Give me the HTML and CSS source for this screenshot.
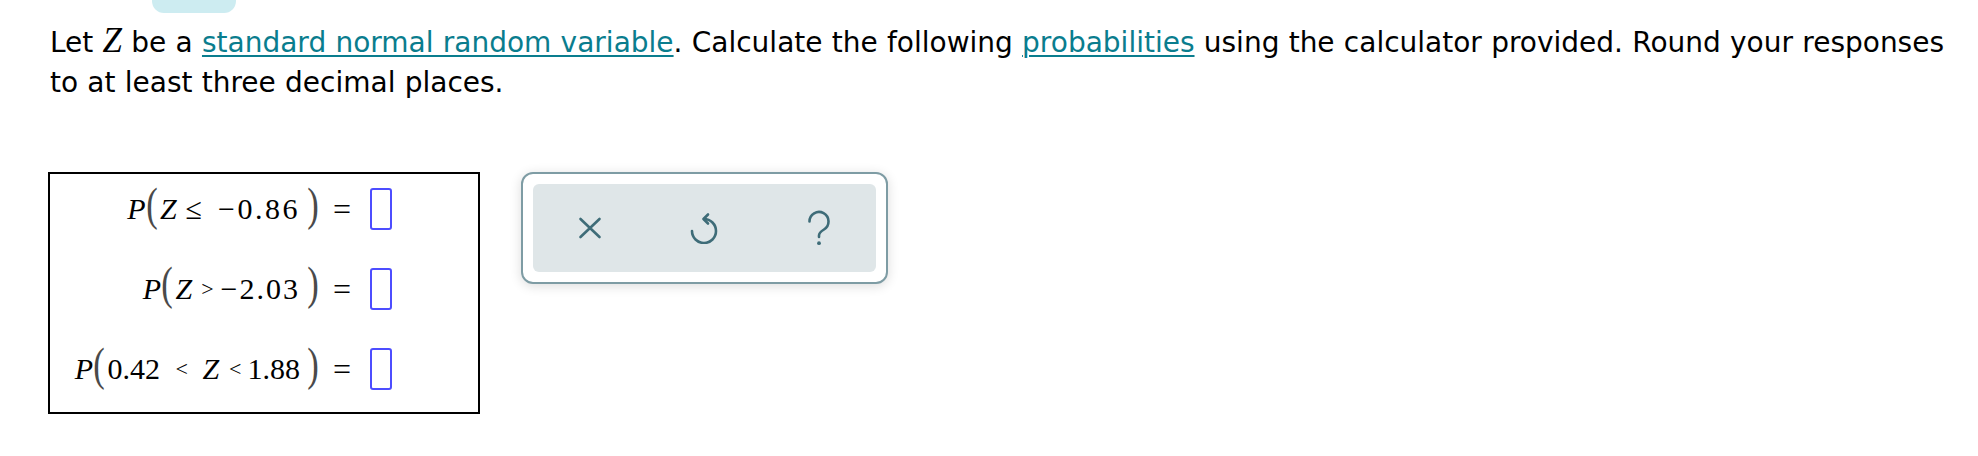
FILE: index.html
```html
<!DOCTYPE html>
<html lang="en">
<head>
<meta charset="utf-8">
<title>Standard normal probabilities</title>
<link rel="stylesheet" href="styles.css">
</head>
<body>
<div class="tab"></div>
<p class="question">Let <i class="mvar">Z</i> be a <a href="#" class="link">standard normal random variable</a>. Calculate the following <a href="#" class="link">probabilities</a> using the calculator provided. Round your responses to at least three decimal places.</p>

<div class="work">
  <div class="mathbox">
    <div class="expr"><i class="it">P</i><span class="paren open">(</span><i class="it">Z</i><span class="rel le">≤</span><span class="num wide">−0.86</span><span class="paren close">)</span></div>
    <div class="eq">=</div>
    <div class="answer"></div>

    <div class="expr"><i class="it">P</i><span class="paren open">(</span><i class="it">Z</i><span class="rel gt">&gt;</span><span class="num mid">−2.03</span><span class="paren close">)</span></div>
    <div class="eq">=</div>
    <div class="answer"></div>

    <div class="expr"><i class="it">P</i><span class="paren open">(</span><span class="num">0.42</span><span class="rel lt1">&lt;</span><i class="it">Z</i><span class="rel lt2">&lt;</span><span class="num">1.88</span><span class="paren close">)</span></div>
    <div class="eq">=</div>
    <div class="answer"></div>
  </div>

  <div class="calc">
    <div class="calc-inner">
      <div class="calc-btn" aria-label="Clear">
        <svg width="24" height="22" viewBox="0 0 24 22"><path d="M2.5 2 L21.5 20 M21.5 2 L2.5 20" fill="none" stroke="#3e6c78" stroke-width="2.6" stroke-linecap="round"/></svg>
      </div>
      <div class="calc-btn" aria-label="Undo">
        <svg width="28" height="32" viewBox="0 0 28 32"><path d="M14 7 A12 12 0 1 1 2 19" fill="none" stroke="#3e6c78" stroke-width="2.6" stroke-linecap="round"/><path d="M18 2.5 L13.5 7 L18 11.5" fill="none" stroke="#3e6c78" stroke-width="2.6" stroke-linecap="round" stroke-linejoin="round"/></svg>
      </div>
      <div class="calc-btn" aria-label="Help">
        <svg width="26" height="36" viewBox="0 0 26 36"><path d="M3.5 11.5 A9.5 9.5 0 1 1 18 19.5 C14.8 21.4 13 22.8 13 25.5 V27" fill="none" stroke="#3e6c78" stroke-width="2.6" stroke-linecap="round"/><circle cx="13" cy="33.2" r="1.9" fill="#3e6c78"/></svg>
      </div>
    </div>
  </div>
</div>
</body>
</html>
```

FILE: styles.css
```css
html, body {
  margin: 0;
  padding: 0;
  background: #ffffff;
}

body {
  font-family: "DejaVu Sans", Verdana, sans-serif;
  color: #000;
}

.tab {
  margin-left: 152px;
  width: 84px;
  height: 13px;
  background: #cdecf1;
  border-radius: 0 0 12px 12px;
}

.question {
  margin: 10px 0 0 50px;
  width: 1920px;
  font-size: 28px;
  line-height: 40px;
  word-spacing: 0.35px;
}

.mvar {
  font-family: "Liberation Serif", "Times New Roman", serif;
  font-style: italic;
  font-size: 35px;
  line-height: 1;
}

.link {
  color: #0a7d8e;
  text-decoration: underline;
  text-decoration-thickness: 2px;
  text-underline-offset: 3px;
}

.work {
  display: flex;
  align-items: flex-start;
  gap: 41px;
  margin-top: 69px;
  padding-left: 48px;
}

.mathbox {
  box-sizing: border-box;
  width: 432px;
  height: 242px;
  border: 2px solid #000;
  padding: 14px 0 22px 0;
  display: grid;
  grid-template-columns: 268px auto 22px;
  justify-content: start;
  grid-auto-rows: 42px;
  row-gap: 38px;
  align-items: center;
  font-family: "Liberation Serif", "Times New Roman", serif;
  font-size: 30px;
}

.expr {
  justify-self: end;
  display: flex;
  align-items: center;
  height: 42px;
  line-height: 42px;
  white-space: nowrap;
}

.it {
  font-style: italic;
}

.paren {
  display: inline-block;
  color: #4a4a4a;
  transform: translateY(-5px) scale(1.15, 1.55);
}

.paren.open {
  margin: 0 3.3px 0 1px;
}

.paren.close {
  margin: 0 0 0 8px;
}

.rel.le {
  margin: 0 16px 0 9px;
}

.rel.gt {
  font-size: 22px;
  margin: 0 7px 0 9px;
}

.rel.lt1 {
  font-size: 22px;
  margin: 0 14.5px 0 15.5px;
}

.rel.lt2 {
  font-size: 22px;
  margin: 0 6px 0 10px;
}

.num.wide {
  letter-spacing: 2.5px;
}

.num.mid {
  letter-spacing: 2px;
}

.eq {
  margin-left: 15px;
  margin-right: 19px;
  line-height: 42px;
  font-size: 32px;
}

.answer {
  box-sizing: border-box;
  width: 22px;
  height: 42px;
  border: 2px solid #4d4dff;
  border-radius: 3px;
  background: #fff;
}

.calc {
  box-sizing: border-box;
  width: 367px;
  height: 112px;
  border: 2px solid #7e9ca4;
  border-radius: 12px;
  padding: 10px;
  background: #fff;
  box-shadow: 0 2px 12px rgba(0, 0, 0, 0.14);
}

.calc-inner {
  display: flex;
  height: 88px;
  background: #dfe6e8;
  border-radius: 6px;
}

.calc-btn {
  flex: 1;
  display: flex;
  align-items: center;
  justify-content: center;
}

.calc-btn svg {
  display: block;
}
```
